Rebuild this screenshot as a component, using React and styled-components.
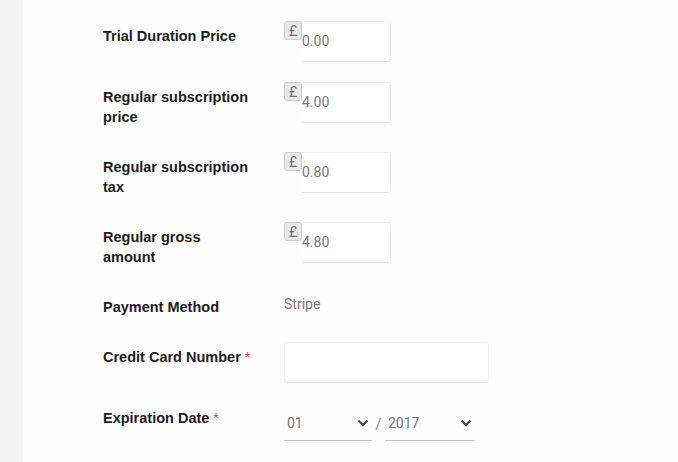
import { createGlobalStyle, styled } from 'styled-components';

const GlobalStyle = createGlobalStyle`
    html, body {
        margin: 0;
        padding: 0;
        background: #fdfdfd;
    }
    * {
        box-sizing: border-box;
    }
`;

const StyledPage = styled.div`
    display: flex;
    min-height: 462px;
    height: 462px;
    overflow: hidden;
`;

const StyledSideStrip = styled.div`
    width: 23px;
    flex-shrink: 0;
    background: #f4f4f4;
`;

const StyledForm = styled.div`
    display: flex;
    flex-direction: column;
    gap: 20px;
    padding: 21px 0 0 80px;
    flex: 1;
`;

const StyledRow = styled.div`
    display: flex;
    align-items: flex-start;
`;

const StyledLabel = styled.div`
    width: 181px;
    padding: 5px 31px 5px 0;
    font-family: 'Liberation Sans', Arial, sans-serif;
    font-weight: bold;
    font-size: 14.5px;
    line-height: 20px;
    color: #1c1c1c;
`;

const StyledStar = styled.span`
    color: #e8384f;
    font-weight: normal;
    margin-left: 4px;
`;

const StyledField = styled.div`
    display: flex;
    align-items: flex-start;
    font-family: Roboto, 'Liberation Sans', sans-serif;
    font-size: 14px;
    color: #777;
`;

const StyledAddon = styled.span`
    width: 18px;
    height: 19px;
    display: flex;
    align-items: flex-end;
    justify-content: center;
    background: #e9e9e9;
    border: 1px solid #cbcbcb;
    border-radius: 3px;
    font-size: 14px;
    line-height: 16px;
    color: #707070;
    padding-bottom: 0;
    overflow: visible;
`;

const StyledBox = styled.div`
    width: ${props => props.w}px;
    height: 41px;
    display: flex;
    align-items: center;
    padding-left: ${props => props.pad || 0}px;
    padding-bottom: 1px;
    background: #fff;
    border: 1px solid #efefef;
    border-bottom-color: #e2e2e2;
    border-left: ${props => props.noLeft ? 'none' : '1px solid #efefef'};
    border-radius: ${props => props.noLeft ? '0 4px 4px 0' : '4px'};
    color: #777;
`;

const StyledStatic = styled.div`
    padding-top: 2px;
    line-height: 20px;
    color: #777;
`;

const StyledSelect = styled.div`
    width: ${props => props.w}px;
    height: 38px;
    display: flex;
    align-items: center;
    justify-content: space-between;
    padding: 2px 3px 0 3px;
    border-bottom: 1px solid #c8c8c8;
    color: #777;
`;

const StyledSlash = styled.span`
    width: 13px;
    text-align: center;
    line-height: 38px;
    padding-top: 2px;
    color: #888;
`;

const Chevron = () => (
    <svg width="12" height="8" viewBox="0 0 12 8">
        <path d="M1.5 1.5 L6 6 L10.5 1.5" fill="none" stroke="#444" strokeWidth="2" />
    </svg>
);

const priceRows = [
    { label: "Trial Duration Price", value: "0.00" },
    { label: "Regular subscription price", value: "4.00" },
    { label: "Regular subscription tax", value: "0.80" },
    { label: "Regular gross amount", value: "4.80" },
];

const PriceField = ({ value }) => (
    <StyledField>
        <StyledAddon>£</StyledAddon>
        <StyledBox w={89} noLeft>{value}</StyledBox>
    </StyledField>
);

const App = () => {
    return (
        <>
            <GlobalStyle />
            <StyledPage>
                <StyledSideStrip />
                <StyledForm>
                    {priceRows.map((item) => (
                        <StyledRow key={item.label}>
                            <StyledLabel>{item.label}</StyledLabel>
                            <PriceField value={item.value} />
                        </StyledRow>
                    ))}
                    <StyledRow>
                        <StyledLabel>Payment Method</StyledLabel>
                        <StyledField>
                            <StyledStatic>Stripe</StyledStatic>
                        </StyledField>
                    </StyledRow>
                    <StyledRow>
                        <StyledLabel>Credit Card Number<StyledStar>*</StyledStar></StyledLabel>
                        <StyledField>
                            <StyledBox w={205} pad={10}></StyledBox>
                        </StyledField>
                    </StyledRow>
                    <StyledRow>
                        <StyledLabel>Expiration Date<StyledStar>*</StyledStar></StyledLabel>
                        <StyledField>
                            <StyledSelect w={88}>
                                <span>01</span>
                                <Chevron />
                            </StyledSelect>
                            <StyledSlash>/</StyledSlash>
                            <StyledSelect w={90}>
                                <span>2017</span>
                                <Chevron />
                            </StyledSelect>
                        </StyledField>
                    </StyledRow>
                </StyledForm>
            </StyledPage>
        </>
    );
};

export default App;
